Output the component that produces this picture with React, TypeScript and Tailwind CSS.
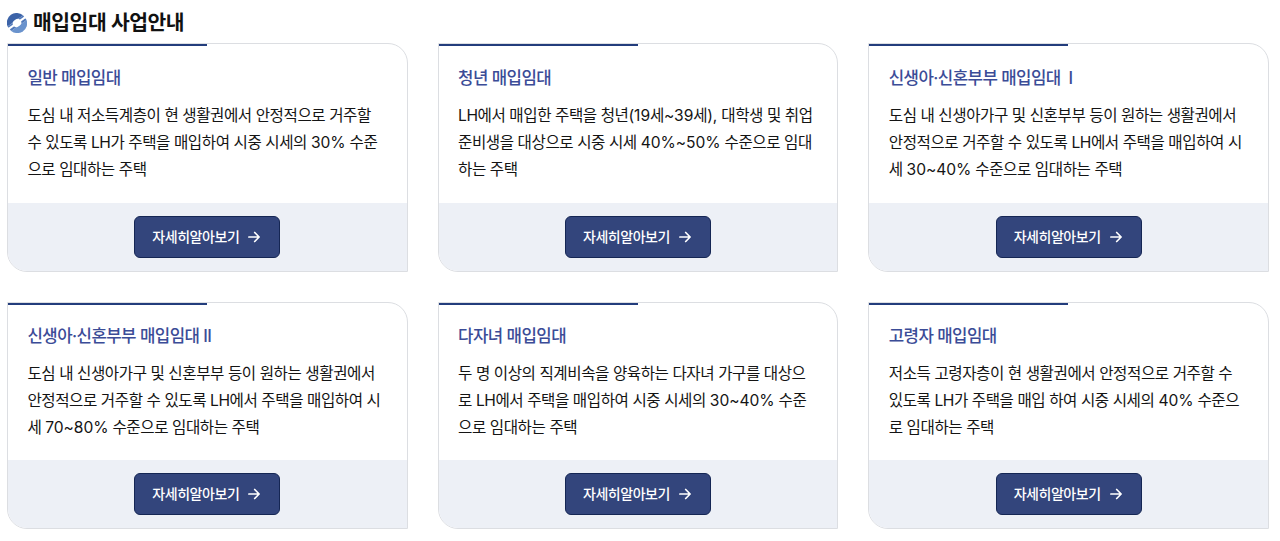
import React from 'react';

const programs = [
  {
    title: '일반 매입임대',
    lines: [
      '도심 내 저소득계층이 현 생활권에서 안정적으로 거주할',
      '수 있도록 LH가 주택을 매입하여 시중 시세의 30% 수준',
      '으로 임대하는 주택',
    ],
  },
  {
    title: '청년 매입임대',
    lines: [
      'LH에서 매입한 주택을 청년(19세~39세), 대학생 및 취업',
      '준비생을 대상으로 시중 시세 40%~50% 수준으로 임대',
      '하는 주택',
    ],
  },
  {
    title: '신생아·신혼부부 매입임대  Ⅰ',
    lines: [
      '도심 내 신생아가구 및 신혼부부 등이 원하는 생활권에서',
      '안정적으로 거주할 수 있도록 LH에서 주택을 매입하여 시',
      '세 30~40% 수준으로 임대하는 주택',
    ],
  },
  {
    title: '신생아·신혼부부 매입임대 II',
    lines: [
      '도심 내 신생아가구 및 신혼부부 등이 원하는 생활권에서',
      '안정적으로 거주할 수 있도록 LH에서 주택을 매입하여 시',
      '세 70~80% 수준으로 임대하는 주택',
    ],
  },
  {
    title: '다자녀 매입임대',
    lines: [
      '두 명 이상의 직계비속을 양육하는 다자녀 가구를 대상으',
      '로 LH에서 주택을 매입하여 시중 시세의 30~40% 수준',
      '으로 임대하는 주택',
    ],
  },
  {
    title: '고령자 매입임대',
    lines: [
      '저소득 고령자층이 현 생활권에서 안정적으로 거주할 수',
      '있도록 LH가 주택을 매입 하여 시중 시세의 40% 수준으',
      '로 임대하는 주택',
    ],
  },
];

function HeadingMark() {
  return (
    <svg width="20" height="20" viewBox="0 0 20 20">
      <path d="M0.6 13.5A9.8 9.8 0 0 1 16 2.3Z" fill="#3c63a8" />
      <path d="M19.6 7A9.8 9.8 0 0 1 4.2 17.9Z" fill="#6a93cd" />
      <path d="M0.6 13.5L4.2 17.9L19.6 7L16 2.3Z" fill="#5078b9" />
      <path d="M1 16.4L19 3.6" stroke="#fff" strokeWidth="2" />
      <ellipse cx="10" cy="10" rx="4.5" ry="3.7" fill="#fff" transform="rotate(-35 10 10)" />
    </svg>
  );
}

function ArrowIcon() {
  return (
    <svg
      width="12"
      height="12"
      viewBox="0 0 12 12"
      fill="none"
      stroke="currentColor"
      strokeWidth="1.7"
      strokeLinecap="round"
      strokeLinejoin="round"
    >
      <path d="M0.9 6H11M6.7 1.5L11.1 6L6.7 10.5" />
    </svg>
  );
}

// Figures are set a little looser than the Hangul around them
function Line({ text }: { text: string }) {
  return (
    <span className="block">
      {text.split(/([\d~%(),]+)/).map((part, i) =>
        i % 2 === 1 ? (
          <span key={i} className="tracking-[-0.05px]">
            {part}
          </span>
        ) : (
          part
        )
      )}
    </span>
  );
}

function ProgramCard({ title, lines }: { title: string; lines: string[] }) {
  return (
    <article className="relative flex h-full flex-col overflow-hidden rounded-tr-[20px] rounded-bl-[20px] border border-[#dcdee2] bg-white">
      <span className="absolute -top-px -left-px h-[3px] w-[200px] border-t border-[#9aa7c6] bg-[#233d7c]" />

      <div className="flex flex-1 flex-col justify-center pl-[19.4px]">
        <h3 className="text-[16.8px] leading-[27px] font-medium tracking-[-0.57px] whitespace-pre text-[#3b4c97]">
          {title}
        </h3>

        <p className="mt-[10px] text-[15.6px] leading-[27px] tracking-[-0.44px] whitespace-nowrap text-[#141414]">
          {lines.map((line) => (
            <Line key={line} text={line} />
          ))}
        </p>
      </div>

      <div className="flex h-[68px] justify-center bg-[#edf0f6] pt-[13px]">
        <button className="flex h-[42px] w-[146px] items-center justify-center gap-[9px] rounded-[6px] border border-[#152654] bg-[#33457c] pr-[2px] text-[14px] font-medium tracking-[-0.45px] text-white">
          <span className="-mt-[2px]">자세히알아보기</span>
          <ArrowIcon />
        </button>
      </div>
    </article>
  );
}

export default function App() {
  return (
    <main className="h-[541px] w-[1280px] overflow-hidden bg-white pt-[8px] pl-[7px] font-['Inter','Noto_Sans_CJK_KR',sans-serif]">
      <div className="flex h-[30px] items-center gap-[6px]">
        <HeadingMark />
        <h2 className="text-[20.4px] leading-[30px] font-semibold tracking-[-0.45px] whitespace-nowrap text-[#111]">
          매입임대 사업안내
        </h2>
      </div>

      <section className="mt-[5px] grid w-[1262px] grid-cols-3 grid-rows-[229px_227px] gap-x-[30px] gap-y-[30px]">
        {programs.map((program) => (
          <ProgramCard key={program.title} {...program} />
        ))}
      </section>
    </main>
  );
}
